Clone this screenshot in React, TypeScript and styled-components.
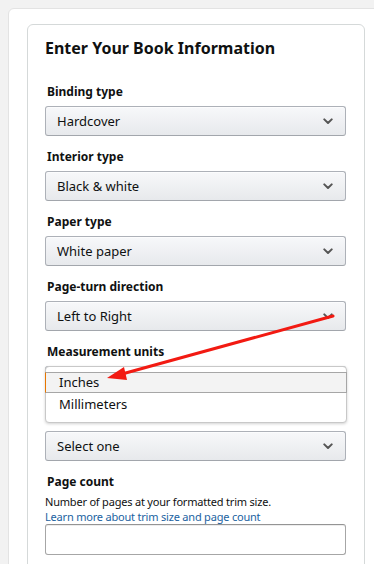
import { FC } from 'react';
import styled, { createGlobalStyle } from 'styled-components';

const GlobalStyle = createGlobalStyle`
  html, body {
    margin: 0;
    padding: 0;
    background: #f2f2f2;
  }
  body {
    font-family: "Noto Sans", "Open Sans", Arial, sans-serif;
    color: #0f1111;
  }
`

interface SelectFieldProps {
  label: string;
  value: string;
  covered?: boolean;
}

const Chevron: FC = () => (
  <ChevronIcon width="10" height="7" viewBox="0 0 10 7">
    <path d="M1.3 1.4 L5 5 L8.7 1.4" fill="none" stroke="#555" strokeWidth="2" strokeLinecap="round" strokeLinejoin="round" />
  </ChevronIcon>
)

const SelectField: FC<SelectFieldProps> = ({ label, value, covered }) => (
  <Field>
    <Label $covered={covered}>{label}</Label>
    <SelectBox>
      <span>{value}</span>
      <Chevron />
    </SelectBox>
  </Field>
)

const App: FC = () => {
  return (
    <>
      <GlobalStyle />
      <Page>
        <OuterPanel>
          <Card>
            <Heading>Enter Your Book Information</Heading>
            <SelectField label="Binding type" value="Hardcover" />
            <SelectField label="Interior type" value="Black & white" />
            <SelectField label="Paper type" value="White paper" />
            <SelectField label="Page-turn direction" value="Left to Right" />
            <Field>
              <Label>Measurement units</Label>
              <PopupAnchor>
                {/* the closed select sits under the open list */}
                <SelectBox aria-hidden="true" />
                <Popup>
                  <Option $active>Inches</Option>
                  <Option>Millimeters</Option>
                </Popup>
              </PopupAnchor>
            </Field>
            <SelectField label="Trim size" value="Select one" covered />
            <Field>
              <Label>Page count</Label>
              <Help>Number of pages at your formatted trim size.</Help>
              <HelpLink href="#">Learn more about trim size and page count</HelpLink>
              <TextInput type="text" />
            </Field>
          </Card>
        </OuterPanel>
        <Annotation width="374" height="564" viewBox="0 0 374 564">
          <line x1="333" y1="316" x2="122" y2="374" stroke="#f21a12" strokeWidth="3" strokeLinecap="round" />
          <polygon points="107,378 124,367 127,380" fill="#f21a12" />
        </Annotation>
      </Page>
    </>
  )
}

const Page = styled.div`
  position: relative;
  width: 374px;
  height: 564px;
  overflow: hidden;
  padding: 8px 0 0 8px;
  box-sizing: border-box;
`

const OuterPanel = styled.div`
  width: 420px;
  min-height: 600px;
  background: #fff;
  border: 1px solid #e3e3e3;
  border-radius: 6px;
  padding: 15px 0 0 18px;
  box-sizing: border-box;
`

const Card = styled.div`
  width: 338px;
  min-height: 560px;
  border: 1px solid #d5d9d9;
  border-radius: 6px;
  padding: 12px 18px 0 17px;
  box-sizing: border-box;
`

const Heading = styled.h1`
  margin: 0 0 22px;
  font-size: 16px;
  line-height: 22px;
  font-weight: 700;
  color: #0f1111;
`

const Field = styled.div`
  display: flex;
  flex-direction: column;
  margin-bottom: 10px;
`

const Label = styled.label<{ $covered?: boolean }>`
  display: block;
  padding: 2px 0 0 2px;
  font-size: 12px;
  line-height: 18px;
  font-weight: 700;
  color: #0f1111;
  margin-bottom: 5px;
  visibility: ${p => (p.$covered ? 'hidden' : 'visible')};
`

const SelectBox = styled.div`
  display: flex;
  align-items: center;
  justify-content: space-between;
  height: 30px;
  box-sizing: border-box;
  padding: 0 11px 0 11px;
  border: 1px solid #adb1b8;
  border-bottom-color: #a2a6ac;
  border-radius: 3px;
  background: linear-gradient(to bottom, #f7f8fa, #e7e9ec);
  box-shadow: 0 1px 0 rgba(255, 255, 255, 0.6) inset;
  font-size: 13px;
  color: #0f1111;
`

const ChevronIcon = styled.svg`
  flex: none;
  margin-right: 1px;
`

const PopupAnchor = styled.div`
  position: relative;
`

const Popup = styled.div`
  position: absolute;
  top: 0;
  left: 0;
  right: -1px;
  height: 57px;
  box-sizing: border-box;
  padding-top: 5px;
  background: #fff;
  border: 1px solid #c8c8c8;
  border-radius: 4px;
  box-shadow: 0 1px 3px rgba(0, 0, 0, 0.18);
  z-index: 2;
`

const Option = styled.div<{ $active?: boolean }>`
  height: 21px;
  line-height: 19px;
  box-sizing: border-box;
  padding-left: 13px;
  font-size: 13px;
  color: #0f1111;
  margin: 0 -1px 1px;
  border: 1px solid ${p => (p.$active ? '#a6a6a6' : 'transparent')};
  border-left-color: ${p => (p.$active ? '#e77600' : 'transparent')};
  background: ${p => (p.$active ? '#f3f3f3' : 'transparent')};
`

const Help = styled.div`
  font-size: 11px;
  line-height: 15px;
  letter-spacing: -0.2px;
  color: #0f1111;
  margin-top: -2px;
`

const HelpLink = styled.a`
  font-size: 11px;
  line-height: 16px;
  letter-spacing: -0.2px;
  color: #2162a1;
  text-decoration: none;
`

const TextInput = styled.input`
  height: 31px;
  box-sizing: border-box;
  margin-top: -1px;
  border: 1px solid #a6a6a6;
  border-top-color: #949494;
  border-radius: 3px;
  box-shadow: 0 1px 0 rgba(255, 255, 255, 0.5), 0 1px 0 rgba(0, 0, 0, 0.07) inset;
  font-size: 13px;
  padding: 0 8px;
  -webkit-appearance: none;

  &:focus {
    outline: none;
  }
`

const Annotation = styled.svg`
  position: absolute;
  top: 0;
  left: 0;
  pointer-events: none;
  z-index: 5;
`

export default App;
